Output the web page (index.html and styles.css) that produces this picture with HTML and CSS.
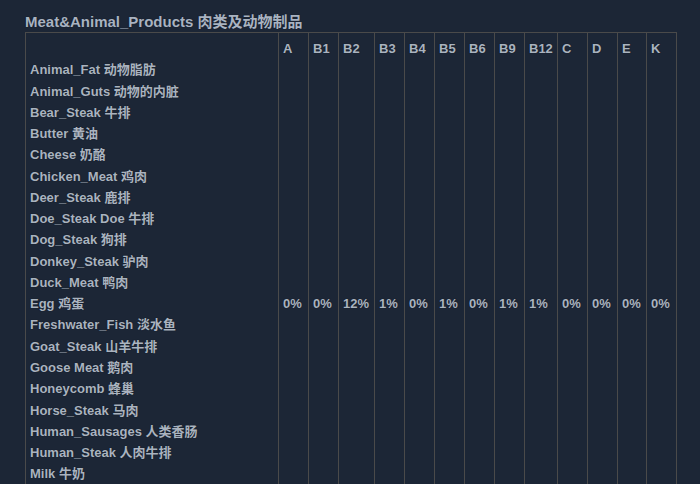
FILE: index.html
```html
<!DOCTYPE html>
<html lang="zh">
<head>
<meta charset="utf-8">
<title>Meat&amp;Animal_Products</title>
<link rel="stylesheet" href="styles.css">
</head>
<body>
<div class="page">
  <h1 class="title">Meat&amp;Animal_Products 肉类及动物制品</h1>
  <table class="grid">
    <colgroup>
      <col class="c-name">
      <col class="c-n"><col class="c-n"><col class="c-w">
      <col class="c-n"><col class="c-n"><col class="c-n">
      <col class="c-n"><col class="c-n"><col class="c-m">
      <col class="c-n"><col class="c-n"><col class="c-s"><col class="c-n">
    </colgroup>
    <thead>
      <tr>
        <th></th>
        <th>A</th><th>B1</th><th>B2</th><th>B3</th><th>B4</th><th>B5</th>
        <th>B6</th><th>B9</th><th>B12</th><th>C</th><th>D</th><th>E</th><th>K</th>
      </tr>
    </thead>
    <tbody>
      <tr>
        <td class="names">Animal_Fat 动物脂肪<br>Animal_Guts 动物的内脏<br>Bear_Steak 牛排<br>Butter 黄油<br>Cheese 奶酪<br>Chicken_Meat 鸡肉<br>Deer_Steak 鹿排<br>Doe_Steak Doe 牛排<br>Dog_Steak 狗排<br>Donkey_Steak 驴肉<br>Duck_Meat 鸭肉<br>Egg 鸡蛋<br>Freshwater_Fish 淡水鱼<br>Goat_Steak 山羊牛排<br>Goose Meat 鹅肉<br>Honeycomb 蜂巢<br>Horse_Steak 马肉<br>Human_Sausages 人类香肠<br>Human_Steak 人肉牛排<br>Milk 牛奶<br>Mutton 羊肉<br>Pork 猪肉<br>Rabbit_Meat 兔肉</td>
        <td>0%</td><td>0%</td><td>12%</td><td>1%</td><td>0%</td><td>1%</td>
        <td>0%</td><td>1%</td><td>1%</td><td>0%</td><td>0%</td><td>0%</td><td>0%</td>
      </tr>
    </tbody>
  </table>
</div>
</body>
</html>
```
FILE: styles.css
```css
html, body {
  margin: 0;
  padding: 0;
  background: #1c2636;
}

body {
  font-family: "Liberation Sans", Arial, "Noto Sans CJK SC", sans-serif;
  color: #aab3bf;
  font-weight: bold;
}

.page {
  padding: 11px 0 0 25px;
}

.title {
  margin: 0;
  font-size: 15px;
  line-height: 21px;
  font-weight: bold;
  color: #a9b3c1;
  text-shadow: 0 0 1px #0c1420;
}

.grid {
  border-collapse: collapse;
  table-layout: fixed;
  width: 651px;
  border: 1px solid #4a4a4a;
  font-size: 13px;
  line-height: 21.27px;
  text-shadow: 0 0 1px #0c1420;
}

.c-name { width: 253px; }
.c-n { width: 30px; }
.c-s { width: 29px; }
.c-w { width: 36px; }
.c-m { width: 33px; }

.grid th,
.grid td {
  border-left: 1px solid #4a4a4a;
  border-right: 1px solid #4a4a4a;
  text-align: left;
  white-space: nowrap;
  font-weight: bold;
  color: #aab3bf;
}

.grid th {
  padding: 5px 4px 0 4px;
  vertical-align: top;
}

.grid td {
  padding: 0 4px;
  vertical-align: middle;
}

.grid td.names {
  padding: 0 4px;
}
```
